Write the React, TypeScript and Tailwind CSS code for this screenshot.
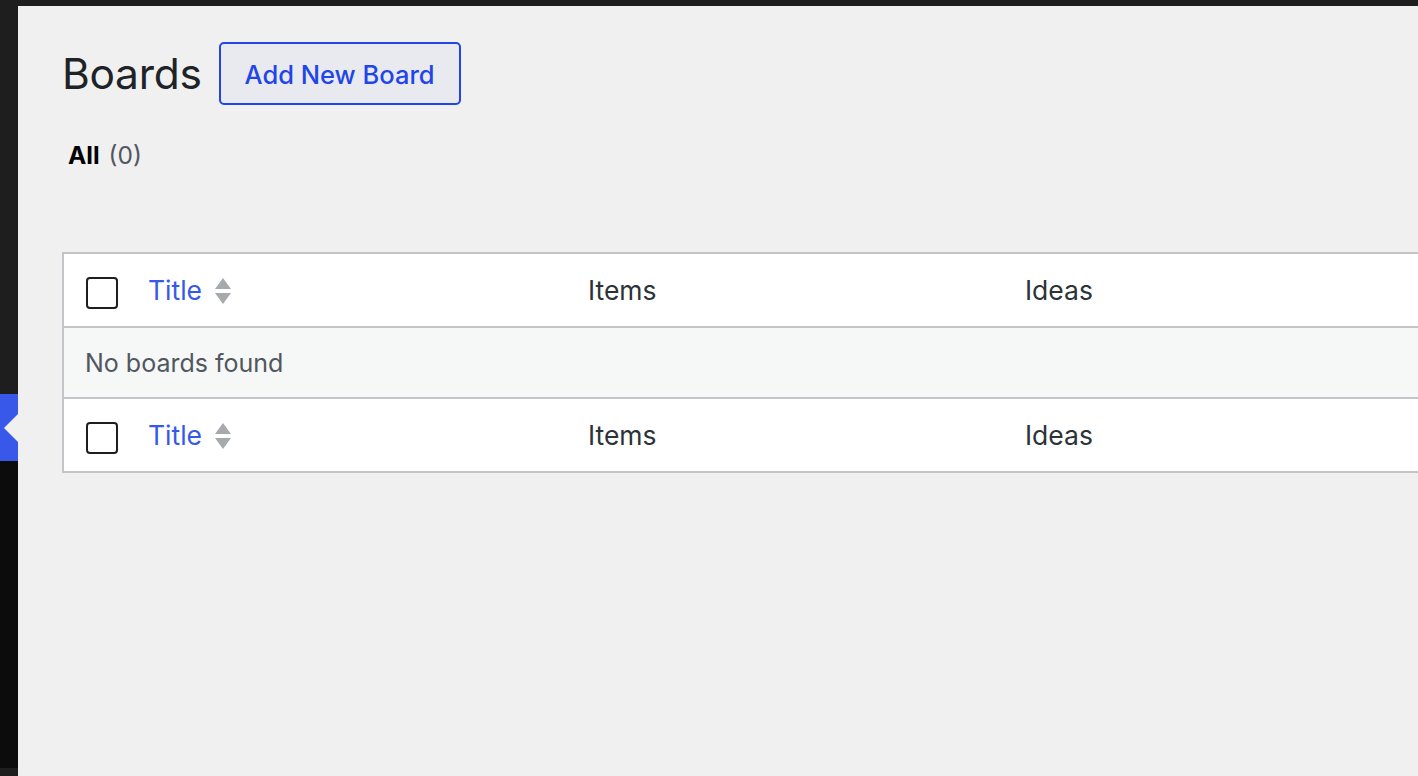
export default function App() {
  const font = { fontFamily: 'Inter, "Noto Sans", sans-serif' }

  const sortIcon = (
    <svg className="w-[18px] h-[30px] ml-3" viewBox="0 0 18 30" fill="#a7aaad">
      <path d="M9 2 L17 13 L1 13 Z" />
      <path d="M1 17 L17 17 L9 28 Z" />
    </svg>
  )

  const headRow = (
    <div className="flex items-center h-[72px] pt-[2px] bg-white text-[26.5px]">
      <div className="w-[84px] pl-[22px] flex items-center">
        <span className="block w-[32px] h-[32px] mt-[4px] border-2 border-[#1e1e1e] rounded-[4px] bg-white"></span>
      </div>
      <div className="w-[440px] flex items-center">
        <span className="text-[#3858e9]">Title</span>
        {sortIcon}
      </div>
      <div className="w-[437px] text-[#2c3338]">Items</div>
      <div className="flex-1 text-[#2c3338]">Ideas</div>
    </div>
  )

  return (
    <div className="w-[1418px] h-[776px] bg-[#1e1e1e] overflow-hidden flex flex-col text-[25px]" style={font}>
      <div className="h-[6px] shrink-0"></div>
      <div className="flex flex-1 min-h-0">
        {/* Sidebar */}
        <div className="w-[18px] shrink-0 flex flex-col">
          <div className="h-[388px] bg-[#1e1e1e]"></div>
          <div className="h-[67px] bg-[#3858e9] flex items-center justify-end">
            <span className="block w-0 h-0 border-y-[14px] border-y-transparent border-r-[14px] border-r-[#f0f0f0]"></span>
          </div>
          <div className="flex-1 bg-[#0c0c0c]"></div>
          <div className="h-[8px] bg-[#1e1e1e]"></div>
        </div>

        {/* Main */}
        <div className="flex-1 bg-[#f0f0f0] pl-[44px] pt-[36px]">
          <div className="flex items-center">
            <h1 className="text-[42.5px] text-[#1d2327] font-normal tracking-[-0.3px] leading-none mt-[1px]">Boards</h1>
            <button className="ml-[17px] h-[63px] w-[242px] pt-[3px] border-2 border-[#2145e6] rounded-[5px] bg-[#e9eaf0] text-[#2145e6] text-[25.5px] font-medium">
              Add New Board
            </button>
          </div>

          <div className="mt-[32px] ml-[6px] text-[24.5px] flex gap-[9px]">
            <span className="font-bold text-black">All</span>
            <span className="text-[#50575e]">(0)</span>
          </div>

          <div className="mt-[78px] w-[1400px] border-2 border-[#c3c4c7]">
            {headRow}
            <div className="h-[73px] pt-[2px] flex items-center bg-[#f6f7f7] border-y-2 border-[#c3c4c7] pl-[21px] text-[#50575e]">
              No boards found
            </div>
            {headRow}
          </div>
        </div>
      </div>
    </div>
  )
}
